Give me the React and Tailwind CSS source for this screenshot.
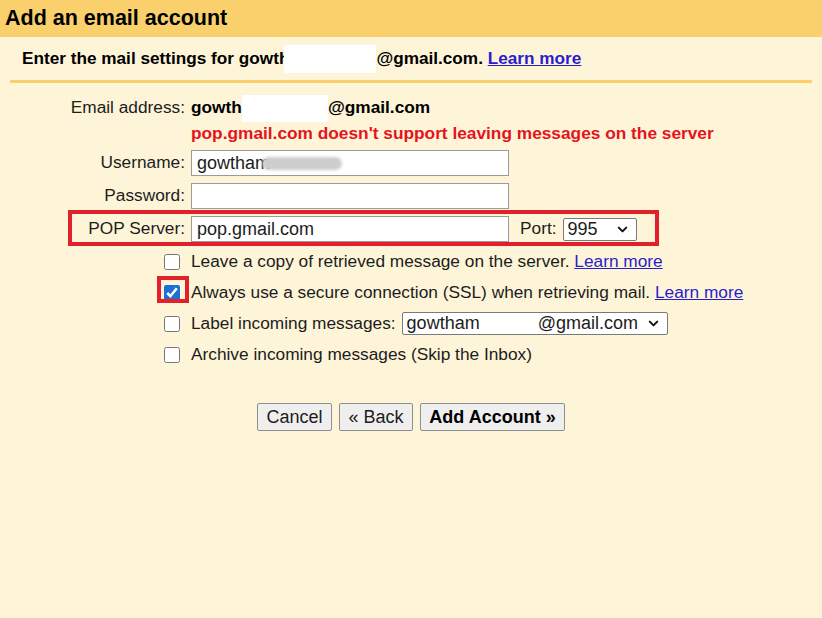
import React from "react";
import { ChevronDown } from "lucide-react";

function Chevron() {
  return <ChevronDown size={15} strokeWidth={3.2} className="text-[#111]" />;
}

function CheckRow({ checked, children, highlight }) {
  return (
    <div className="flex items-center h-[31px]">
      <div className="relative ml-[164px] mr-[11px] flex items-center">
        <input
          type="checkbox"
          defaultChecked={checked}
          className="w-[16px] h-[16px] m-0 accent-[#1a6fd8]"
        />
        {highlight && (
          <div className="absolute pointer-events-none border-4 border-[#e1202b] left-[-7px] top-[-9px] w-[32px] h-[27px]" />
        )}
      </div>
      <div className="flex items-center">{children}</div>
    </div>
  );
}

export default function App() {
  const link = "text-[#2a1dcc] underline";
  return (
    <div
      className="w-[822px] h-[618px] bg-[#fef5d9] text-[#1c1c1c] overflow-hidden"
      style={{ fontFamily: "'Liberation Sans', Arial, sans-serif" }}
    >
      {/* header */}
      <div className="h-[37px] bg-[#f9d06b] flex items-center px-[5px] pt-[1px]">
        <h1 className="text-[21.5px] font-bold text-black leading-none">Add an email account</h1>
      </div>

      {/* sub header */}
      <div className="h-[43px] flex items-center pl-[22px] text-[17.2px] font-bold text-black">
        <span>Enter the mail settings for gowth</span>
        <span className="inline-block -ml-[5px] bg-white w-[92px] h-[28px]" />
        <span>@gmail.com.&nbsp;</span>
        <span className={link}>Learn more</span>
      </div>
      <div className="mx-[10px] h-[3px] bg-[#f9d06b]" />

      {/* form */}
      <div className="text-[17.3px]">
        <div className="flex items-center h-[24px] mt-[13px]">
          <div className="w-[185px] text-right">Email address:</div>
          <div className="ml-[6px] flex items-center font-bold text-black">
            <span>gowth</span>
            <span className="inline-block bg-white w-[86px] h-[27px]" />
            <span>@gmail.com</span>
          </div>
        </div>
        <div className="flex items-center h-[24px] mt-[2px]">
          <div className="ml-[191px] font-bold text-[#e6121c]">
            pop.gmail.com doesn't support leaving messages on the server
          </div>
        </div>

        <div className="flex items-center h-[26px] mt-[4px]">
          <div className="w-[185px] text-right">Username:</div>
          <div className="ml-[6px] w-[318px] h-[26px] bg-white border border-[#9b9b9b] flex items-center px-[5px] text-[18px]">
            <span>gowtham</span>
            <span className="inline-block -ml-[8px] w-[80px] h-[13px] rounded-full bg-[#cdcdcd] blur-[1.5px]" />
          </div>
        </div>

        <div className="flex items-center h-[26px] mt-[7px]">
          <div className="w-[185px] text-right">Password:</div>
          <div className="ml-[6px] w-[318px] h-[26px] bg-white border border-[#9b9b9b]" />
        </div>

        <div className="relative flex items-center h-[26px] mt-[7px]">
          <div className="w-[185px] text-right">POP Server:</div>
          <div className="ml-[6px] w-[318px] h-[26px] bg-white border border-[#9b9b9b] flex items-center px-[5px] text-[18px]">
            pop.gmail.com
          </div>
          <div className="ml-[11px]">Port:</div>
          <div className="ml-[6px] w-[74px] h-[23px] bg-white border border-[#7a7a7a] rounded-[2px] flex items-center justify-between pl-[4px] pr-[6px] text-[18px]">
            <span>995</span>
            <Chevron />
          </div>
          <div className="absolute pointer-events-none border-4 border-[#e1202b] left-[68px] top-[-6px] w-[591px] h-[36px]" />
        </div>

        <div className="mt-[4px]">
          <CheckRow>
            <span>Leave a copy of retrieved message on the server.&nbsp;</span>
            <span className={link}>Learn more</span>
          </CheckRow>
          <CheckRow checked highlight>
            <span>Always use a secure connection (SSL) when retrieving mail.&nbsp;</span>
            <span className={link}>Learn more</span>
          </CheckRow>
          <CheckRow>
            <span>Label incoming messages:</span>
            <div className="ml-[6px] w-[266px] h-[23px] bg-white border border-[#7a7a7a] rounded-[2px] flex items-center pl-[4px] pr-[6px] text-[18px]">
              <span>gowtham</span>
              <span className="inline-block bg-white w-[58px] h-[21px]" />
              <span>@gmail.com</span>
              <span className="ml-auto">
                <Chevron />
              </span>
            </div>
          </CheckRow>
          <CheckRow>
            <span>Archive incoming messages (Skip the Inbox)</span>
          </CheckRow>
        </div>

        <div className="flex justify-center gap-[7px] mt-[33px] text-[18px]">
          <button className="h-[28px] w-[75px] bg-[#efefef] border border-[#8f8f8f] rounded-[2px]">
            Cancel
          </button>
          <button className="h-[28px] w-[74px] bg-[#efefef] border border-[#8f8f8f] rounded-[2px]">
            « Back
          </button>
          <button className="h-[28px] w-[145px] bg-[#efefef] border border-[#8f8f8f] rounded-[2px] font-bold text-black">
            Add Account »
          </button>
        </div>
      </div>
    </div>
  );
}
